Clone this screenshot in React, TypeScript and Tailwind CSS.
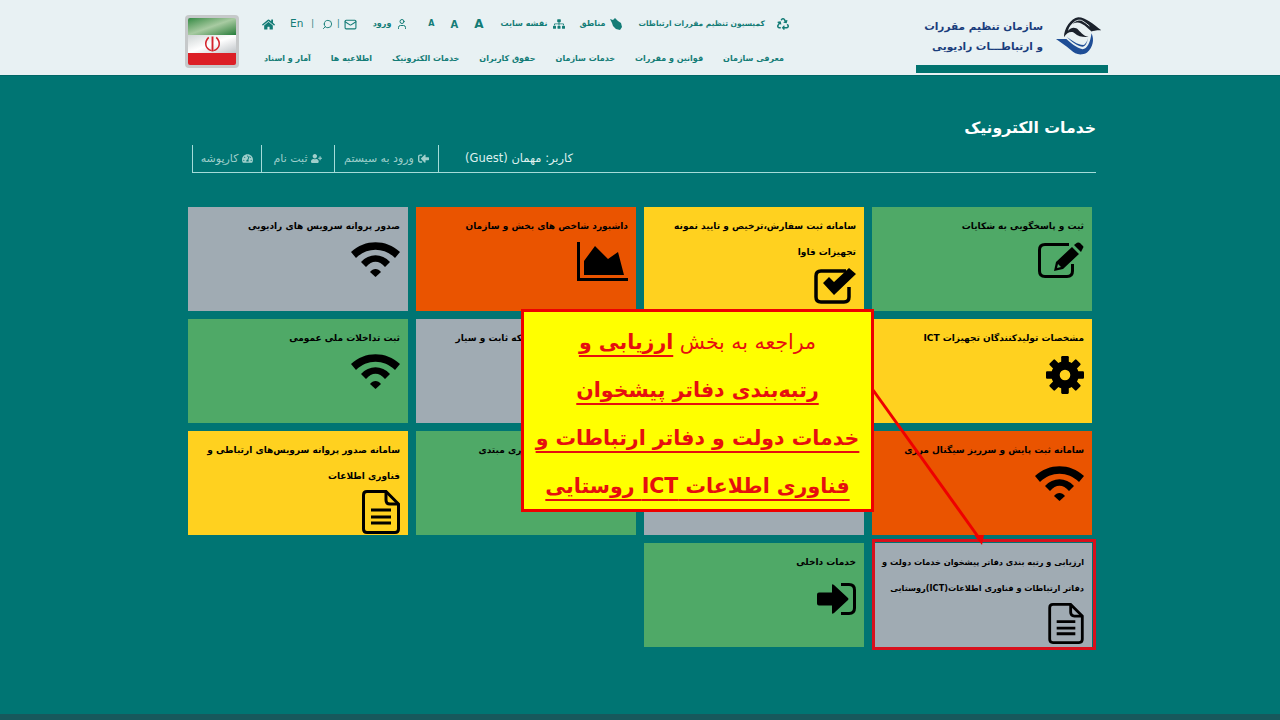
import React from "react";
import { FaHome, FaRecycle, FaSignInAlt, FaSitemap, FaTachometerAlt, FaUserPlus } from "react-icons/fa";
import { LuMail, LuSearch, LuUser } from "react-icons/lu";

const green = "bg-[#4fa967]";
const yellow = "bg-[#ffd11f]";
const orange = "bg-[#ea5400]";
const gray = "bg-[#a0abb3]";

function WifiIcon() {
  return (
    <svg width="49" height="35" viewBox="0 0 49 35" fill="currentColor">
      <path d="M0 10 C14 -3 35 -3 49 10 L44 16 C33 5 16 5 5 16 Z" />
      <path d="M10 20 C18 11 31 11 39 20 L34 25 C28 18 21 18 15 25 Z" />
      <path d="M19 30 C22 26 27 26 30 30 L24.5 35 Z" />
    </svg>
  );
}

function EditIcon() {
  return (
    <svg width="46" height="36" viewBox="0 0 46 36">
      <path d="M31 2.5 H7 Q1.5 2.5 1.5 8 V29 Q1.5 34.5 7 34.5 H29 Q34.5 34.5 34.5 29 V22" fill="none" stroke="currentColor" strokeWidth="3" />
      <path d="M16 29 L18 20 L34 5 L41 12 L25 27 Z M20 22 L19 26 L23 25 Z" fill="currentColor" fillRule="evenodd" />
      <path d="M36 3 L39 0.7 Q41 0 42 1 L45 4 Q46 5 45 6 L43 10 Z" fill="currentColor" />
    </svg>
  );
}

function CheckIcon() {
  return (
    <svg width="42" height="36" viewBox="0 0 42 36">
      <path d="M32 3 H7 Q2 3 2 8 V29 Q2 34 7 34 H30 Q35 34 35 29 V19" fill="none" stroke="currentColor" strokeWidth="3.5" />
      <path d="M9 15 L15 9 L20 14 L35 0 L42 6 L20 27 Z" fill="currentColor" />
    </svg>
  );
}

function ChartIcon() {
  return (
    <svg width="51" height="39" viewBox="0 0 51 39">
      <path d="M1.5 0 V37.5 H51" fill="none" stroke="currentColor" strokeWidth="3" />
      <path d="M7 33 V19 L18 4 L31 17 L41 10 L47 33 Z" fill="currentColor" />
    </svg>
  );
}

function GearIcon() {
  return (
    <svg className="mt-[2px]" width="38" height="38" viewBox="0 0 100 100">
      <circle cx="50" cy="50" r="25" fill="none" stroke="currentColor" strokeWidth="22" />
      {[0, 45, 90, 135, 180, 225, 270, 315].map((a) => (
        <rect key={a} x="40" y="0" width="20" height="24" rx="3" fill="currentColor" transform={`rotate(${a} 50 50)`} />
      ))}
    </svg>
  );
}

function DocIcon({ w = 38, h = 44, className = "" }: { w?: number; h?: number; className?: string }) {
  return (
    <svg className={className} width={w} height={h} viewBox="0 0 38 44" fill="none" stroke="currentColor" strokeWidth="3">
      <path d="M5 1.5 H24 L36.5 14 V39 Q36.5 42.5 33 42.5 H5 Q1.5 42.5 1.5 39 V5 Q1.5 1.5 5 1.5 Z" />
      <path d="M24 1.5 V10 Q24 14 28 14 H36.5" />
      <path d="M9 20 H29 M9 27 H29 M9 33 H29" />
    </svg>
  );
}

function LoginIcon() {
  return (
    <svg className="mt-[5px]" width="39" height="32" viewBox="0 0 39 32">
      <path d="M2 9.5 H15 V2 Q15 0.5 17 2 L31 15 Q32 16 31 17 L17 30 Q15 31.5 15 30 V22.5 H2 Q0 22.5 0 20.5 V11.5 Q0 9.5 2 9.5 Z" fill="currentColor" />
      <path d="M24 1.5 H32 Q37.5 1.5 37.5 7 V25 Q37.5 30.5 32 30.5 H24" fill="none" stroke="currentColor" strokeWidth="3" />
    </svg>
  );
}

function Logo() {
  return (
    <svg width="47" height="40" viewBox="22 20 158 135">
      <path d="M52 92 C52 60 75 28 100 24 C125 24 155 50 178 68 C165 67 150 70 145 72 C130 60 115 42 97 42 C80 42 68 55 66 70 C76 56 92 58 100 66 C110 76 120 88 135 90 C120 92 100 90 88 78 C80 70 62 72 52 92 Z" fill="#1b222c" />
      <path d="M72 60 C80 42 95 30 112 35 C122 40 130 48 138 54" fill="none" stroke="#e8f1f3" strokeWidth="3" />
      <path d="M25 98 H60 C75 110 92 128 115 132 C130 130 140 112 145 78 C155 100 150 125 130 143 C110 155 90 150 75 135 C60 122 40 108 25 98 Z" fill="#1f4e96" />
      <path d="M62 92 C78 100 95 118 118 118 C128 114 132 100 134 92 C130 112 124 124 114 124 C95 122 78 106 62 92 Z" fill="#1f4e96" />
    </svg>
  );
}

function Flag() {
  return (
    <div className="w-[54px] h-[53px] bg-[#c6c9ca] rounded-[4px] p-[3px] flex">
      <div className="flex-1 flex flex-col rounded-[2px] overflow-hidden">
        <div className="h-[17px] bg-gradient-to-br from-[#2f8a44] via-[#a8cba2] to-[#1f7d3a]" />
        <div className="flex-1 bg-gradient-to-br from-[#cfd5d5] via-white to-[#bfc4c8] flex items-center justify-center">
          <svg width="17" height="18" viewBox="0 0 18 18" fill="none" stroke="#d4232b" strokeWidth="1.6">
            <path d="M9 1 V17" strokeWidth="2" />
            <path d="M5 2 C0 7 1 14 8 16" />
            <path d="M13 2 C18 7 17 14 10 16" />
          </svg>
        </div>
        <div className="h-[12px] bg-[#dc1f26]" />
      </div>
    </div>
  );
}

function Tile({ title, color, icon }: { title: React.ReactNode; color: string; icon?: React.ReactNode }) {
  return (
    <div className={`${color} h-[104px] px-2 pt-[6px] overflow-hidden text-black`}>
      <p className="text-[9px] leading-[26px] font-bold whitespace-nowrap">{title}</p>
      {icon && <div className="flex mt-[3px]">{icon}</div>}
    </div>
  );
}

export default function App() {
  return (
    <div dir="rtl" className="relative h-screen flex flex-col overflow-hidden bg-[#007573] font-['DejaVu_Sans',sans-serif]">
      {/* هدر */}
      <header className="h-[76px] shrink-0 bg-[#e8f1f3] border-b border-[#006766]">
        <div dir="ltr" className="w-[923px] h-[75px] mr-[172px] flex">
          <div className="pt-[15px]">
            <Flag />
          </div>
          <div className="w-[654px] flex flex-col text-[#137c76] text-[8px] font-bold whitespace-nowrap">
            <div className="h-[48px] flex items-center ml-[23px]">
              <FaHome className="text-[13px]" />
              <span className="ml-[15px] text-[10.5px] font-normal">En</span>
              <span className="mx-[8px] font-normal">|</span>
              <LuSearch className="text-[11px] -scale-x-100" />
              <span className="mx-[4px] font-normal">|</span>
              <LuMail className="text-[13px]" />
              <span className="ml-[16px]">ورود</span>
              <LuUser className="ml-[5px] text-[12px]" />
              <span className="ml-[20px] text-[8px]">A</span>
              <span className="ml-[16px] text-[10px]">A</span>
              <span className="ml-[16px] text-[12px]">A</span>
              <span className="ml-[17px]">نقشه سایت</span>
              <FaSitemap className="ml-[5px] text-[12px]" />
              <span className="ml-[15px]">مناطق</span>
              <svg className="ml-[5px]" width="12" height="12" viewBox="0 0 12 12" fill="currentColor">
                <path d="M0 1 L3 2 L5 0 L8 3 L11 5 L12 9 L10 12 L6 11 L3 8 L2 5 Z" />
              </svg>
              <span className="ml-[16px] text-[7.5px]">کمیسیون تنظیم مقررات ارتباطات</span>
              <FaRecycle className="ml-[12px] text-[12px]" />
            </div>
            <nav className="ml-[25px] w-[520px] flex justify-between mt-[5px]">
              <a>آمار و اسناد</a>
              <a>اطلاعیه ها</a>
              <a>خدمات الکترونیک</a>
              <a>حقوق کاربران</a>
              <a>خدمات سازمان</a>
              <a>قوانین و مقررات</a>
              <a>معرفی سازمان</a>
            </nav>
          </div>
          <div className="ml-[23px] w-[192px] flex flex-col">
            <div dir="rtl" className="flex items-center gap-[12px] pt-[6px] pr-[6px] h-[65px] whitespace-nowrap">
              <Logo />
              <div className="text-[#1a3d7c] text-[10.5px] leading-[20px] font-bold">
                <div>سازمان تنظیم مقررات</div>
                <div>و ارتباطـــات رادیویی</div>
              </div>
            </div>
            <div className="h-[8px] bg-[#00736f]" />
          </div>
        </div>
      </header>

      <main className="flex-1 w-[904px] mx-auto">
        <h1 className="-mr-1 mt-[40px] text-white text-[15.7px] leading-6 font-bold">خدمات الکترونیک</h1>
        <div className="-mr-1 ml-1 mt-[5px] h-[28px] flex justify-end border-b border-[#a5dcd9] whitespace-nowrap">
          <div className="text-[#dff0ee] text-[11.5px] leading-[26px]">کاربر: مهمان (Guest)</div>
          <div className="mr-[26px] flex text-[#9fcfcb] text-[11px] leading-[26px]">
            <div className="w-[104px] border-r border-[#a5dcd9] flex items-center justify-center gap-1">
              <FaSignInAlt className="text-[11px] -scale-x-100" /> ورود به سیستم
            </div>
            <div className="w-[73px] border-r border-[#a5dcd9] flex items-center justify-center gap-1">
              <FaUserPlus className="text-[11px]" /> ثبت نام
            </div>
            <div className="w-[70px] border-x border-[#a5dcd9] flex items-center justify-center gap-1">
              <FaTachometerAlt className="text-[11px]" /> کارپوشه
            </div>
          </div>
        </div>

        <div className="mt-[34px] grid grid-cols-4 gap-2">
          <Tile title="ثبت و پاسخگویی به شکایات" color={green} icon={<EditIcon />} />
          <Tile title={<>سامانه ثبت سفارش،ترخیص و تایید نمونه<br />تجهیزات فاوا</>} color={yellow} icon={<CheckIcon />} />
          <Tile title="داشبورد شاخص های بخش و سازمان" color={orange} icon={<ChartIcon />} />
          <Tile title="صدور پروانه سرویس های رادیویی" color={gray} icon={<WifiIcon />} />

          <Tile title="مشخصات تولیدکنندگان تجهیزات ICT" color={yellow} icon={<GearIcon />} />
          <Tile title="" color={yellow} />
          <Tile title="ثبت اطلاعات پوشش شبکه ثابت و سیار" color={gray} />
          <Tile title="ثبت تداخلات ملی عمومی" color={green} icon={<WifiIcon />} />

          <Tile title="سامانه ثبت پایش و سرریز سیگنال مرزی" color={orange} icon={<WifiIcon />} />
          <Tile title="" color={gray} />
          <Tile title="سامانه ثبت پروانه اپراتوری مبتدی" color={green} />
          <Tile title={<>سامانه صدور پروانه سرویس‌های ارتباطی و<br />فناوری اطلاعات</>} color={yellow} icon={<DocIcon className="-mt-[2px]" />} />

          <div className={`${gray} h-[104px] relative px-2 pt-[6px] text-black`}>
            <p className="text-[8.2px] leading-[26px] font-bold whitespace-nowrap">
              ارزیابی و رتبه بندی دفاتر پیشخوان خدمات دولت و<br />
              دفاتر ارتباطات و فناوری اطلاعات(ICT)روستایی
            </p>
            <div className="flex mt-[2px]"><DocIcon w={36} h={41} /></div>
            <div className="absolute -top-1 left-0 -right-1 -bottom-[3px] border-[3px] border-[#d8101c]" />
          </div>
          <Tile title="خدمات داخلی" color={green} icon={<LoginIcon />} />
        </div>
      </main>

      <div className="h-[6px] bg-[#17585c] shrink-0" />

      {/* پیام روی تصویر */}
      <div className="absolute left-[521px] top-[309px] w-[353px] h-[203px] border-[3px] border-[#ee0000] bg-[#ffff00] text-[#e60f0f] text-center text-[20.5px] leading-[48px] pt-[6px] whitespace-nowrap">
        <div>مراجعه به بخش <b className="underline decoration-2 underline-offset-[6px] [text-decoration-skip-ink:none]">ارزیابی و</b></div>
        <div className="font-bold underline decoration-2 underline-offset-[6px] [text-decoration-skip-ink:none]">رتبه‌بندی دفاتر پیشخوان</div>
        <div className="font-bold underline decoration-2 underline-offset-[6px] [text-decoration-skip-ink:none]">خدمات دولت و دفاتر ارتباطات و</div>
        <div className="font-bold underline decoration-2 underline-offset-[6px] [text-decoration-skip-ink:none]">فناوری اطلاعات ICT روستایی</div>
      </div>
      <svg className="absolute left-[870px] top-[385px]" width="120" height="165" viewBox="0 0 120 165">
        <path d="M3 5 L109 153" stroke="#ee0000" strokeWidth="3" fill="none" />
        <path d="M104 150 L114 150 L112 160 Z" fill="#ee0000" />
      </svg>
    </div>
  );
}
